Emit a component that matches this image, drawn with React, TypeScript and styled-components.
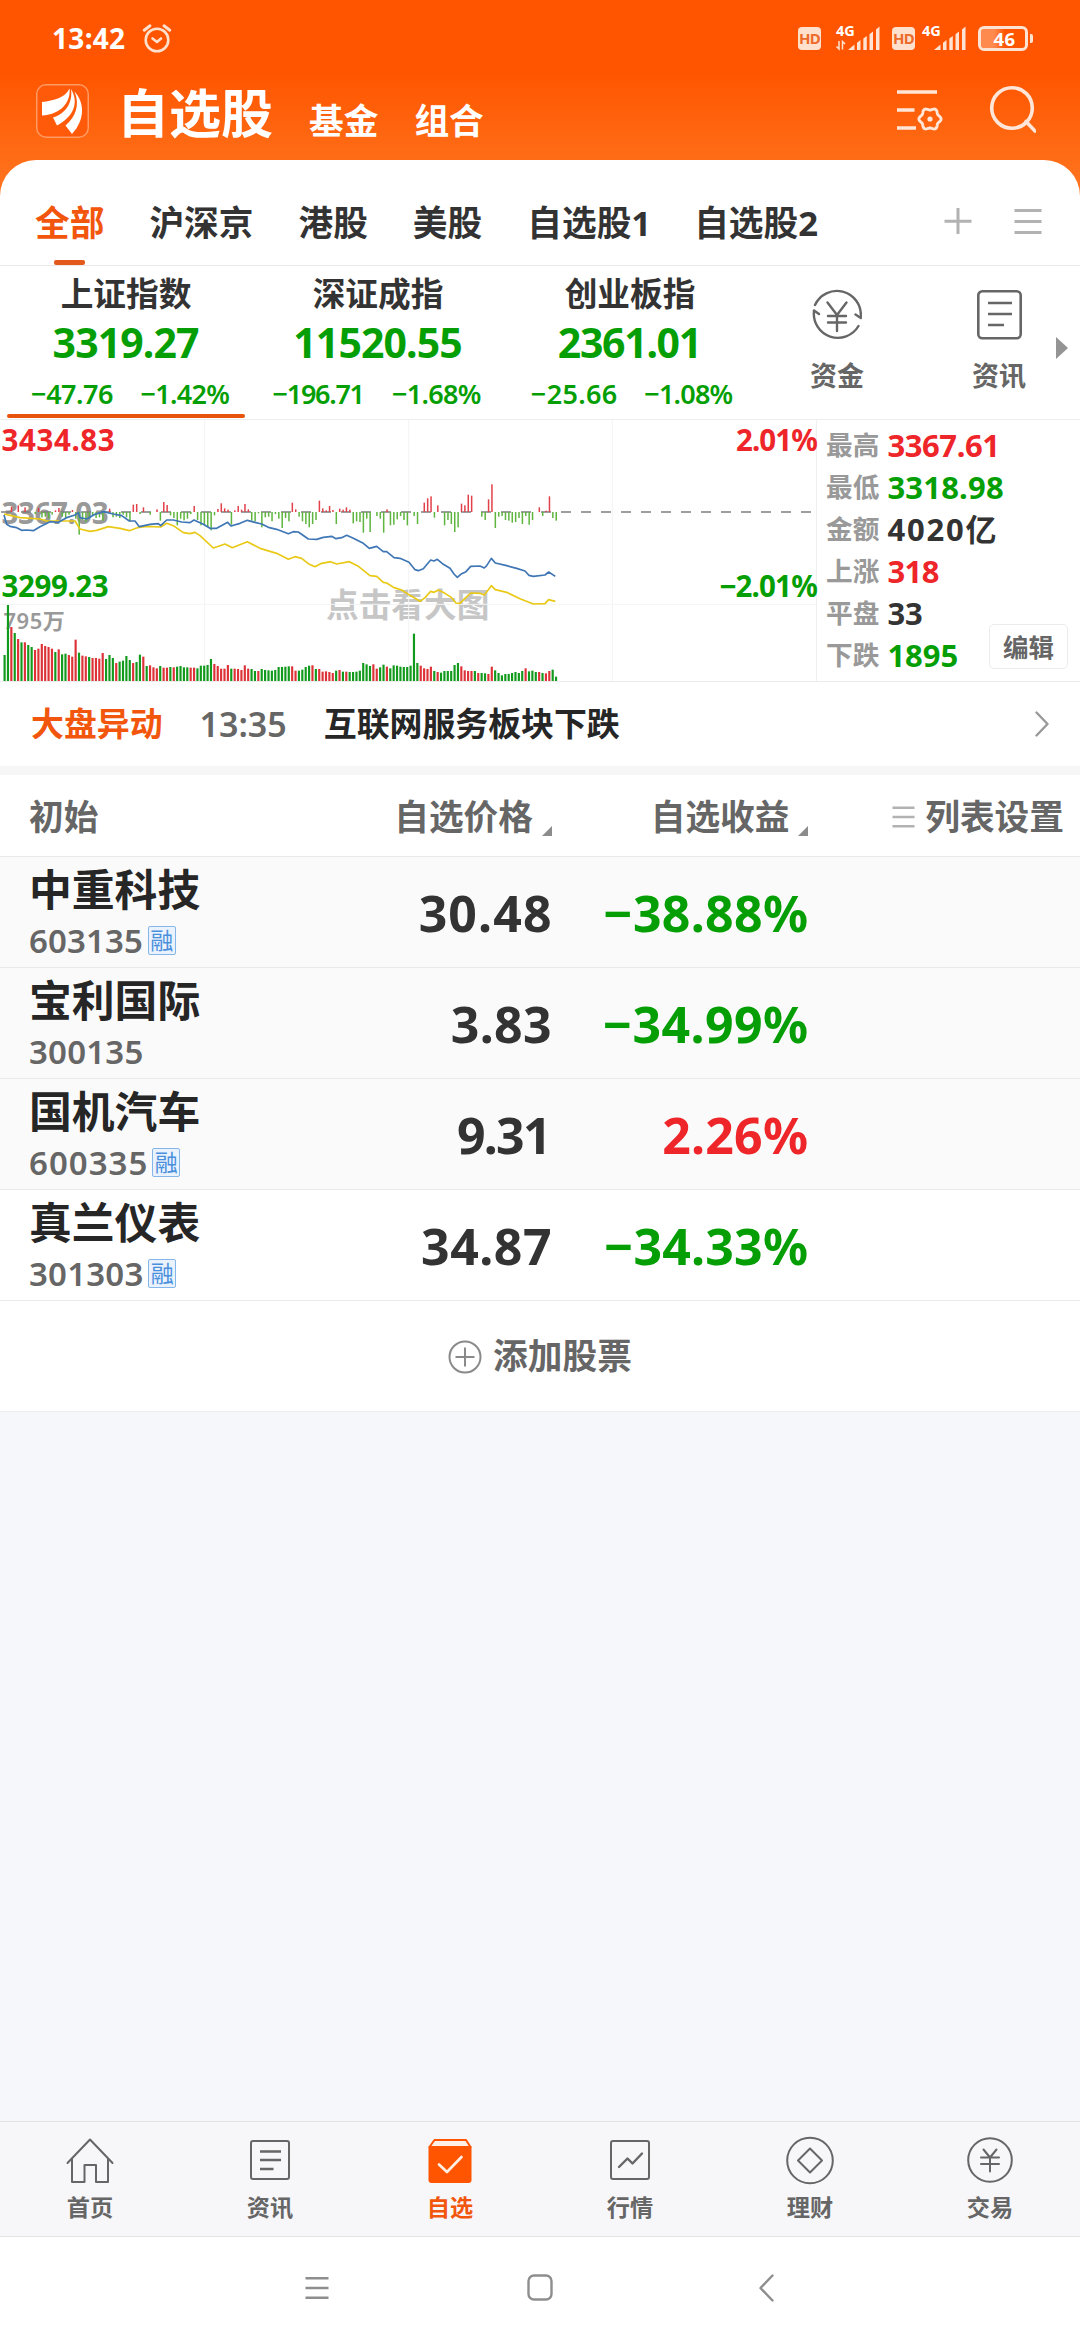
import React from "react";
import styled, { createGlobalStyle } from "styled-components";

const C = {
  orange: "#ff5500",
  accent: "#f2560d",
  green: "#059f05",
  red: "#ee2529",
  ink: "#333333",
  dark: "#262626",
  mid: "#666666",
  soft: "#999999",
  line: "#e9e9e9",
};

const Global = createGlobalStyle`
  html, body { margin: 0; padding: 0; background: #fff; }
  * { box-sizing: border-box; }
  body {
    font-family: "Noto Sans", "Noto Sans CJK SC", sans-serif;
    font-weight: 700;
    color: ${C.ink};
  }
`;

const Screen = styled.div`
  width: 1080px;
  height: 2340px;
  display: flex;
  flex-direction: column;
  overflow: hidden;
  background: #f6f7fb;
  white-space: nowrap;
`;

const Text = styled.span<{ $size: number; $color?: string; $ls?: number; $weight?: number; $lh?: number }>`
  font-size: ${(p) => p.$size}px;
  line-height: ${(p) => p.$lh ?? p.$size + 4}px;
  color: ${(p) => p.$color ?? "inherit"};
  letter-spacing: ${(p) => p.$ls ?? 0}px;
  margin-right: ${(p) => -(p.$ls ?? 0)}px;
  font-weight: ${(p) => p.$weight ?? 700};
  display: block;
`;

/* ---------- top ---------- */

const Top = styled.header`
  height: 266px;
  display: flex;
  flex-direction: column;
  background: linear-gradient(#ff5500 0, #ff5500 72px, #ff6e18 165px, #ff7420 200px);
`;

const StatusBar = styled.div`
  height: 76px;
  padding: 0 47px 0 52px;
  display: flex;
  align-items: center;
  gap: 17px;
  color: #fff;
`;

const StatusIcons = styled.div`
  margin-left: auto;
  display: flex;
  align-items: center;
`;

const HdBadge = styled.span`
  width: 23px;
  height: 23px;
  border-radius: 4px;
  background: #ffe0cc;
  color: #ec6a2a;
  font-size: 15px;
  line-height: 23px;
  display: flex;
  justify-content: center;
  letter-spacing: -0.8px;
`;

const Signal = styled.span<{ $wide?: boolean }>`
  position: relative;
  width: 46px;
  height: 25px;
  margin: ${(p) => (p.$wide ? "0 10px 0 15px" : "0 8px 0 7px")};
`;

const Net = styled.span`
  position: absolute;
  left: 0;
  top: -2px;
  font-size: 14.5px;
  line-height: 13px;
`;

const BatteryBox = styled.span`
  display: flex;
  align-items: center;
  margin-left: 2px;
  gap: 2px;
  &::after {
    content: "";
    width: 3px;
    height: 9px;
    border-radius: 0 2px 2px 0;
    background: #ffe3d2;
  }
`;

const Battery = styled.span`
  width: 50px;
  height: 25px;
  border: 3px solid #ffe3d2;
  border-radius: 6px;
  font-size: 18.5px;
  line-height: 19px;
  text-align: center;
  padding-left: 3px;
  letter-spacing: 0.3px;
  background: linear-gradient(90deg, #ff8a4d 0 13px, transparent 24px);
  background-clip: padding-box;
`;

const TitleBar = styled.div`
  height: 84px;
  padding: 0 44px 0 36px;
  display: flex;
`;

const Logo = styled.div`
  width: 53px;
  height: 54px;
  margin-top: 8px;
  border-radius: 10px;
  background: #ff5a0a;
  box-shadow: inset 0 0 0 1.5px #ff9a63;
`;

const Titles = styled.div`
  display: flex;
  align-items: flex-end;
  height: 56px;
  gap: 36px;
  margin: 9px 0 0 28px;
  color: #fff;
`;

const SubTitle = styled(Text)`
  padding-bottom: 1px;
`;

const TopIcons = styled.div`
  margin-left: auto;
  margin-top: 8px;
  display: flex;
  gap: 43px;
`;

const TabSheet = styled.div`
  height: 106px;
  background: #fff;
  border-radius: 36px 36px 0 0;
  border-bottom: 1px solid ${C.line};
  padding: 0 38px 0 35px;
  display: flex;
`;

const Tabs = styled.nav`
  display: flex;
  gap: 45px;
`;

const Tab = styled.span<{ $on?: boolean }>`
  font-size: 34.7px;
  line-height: 40px;
  padding-top: 43px;
  color: ${(p) => (p.$on ? C.accent : C.ink)};
  display: flex;
  flex-direction: column;
  &:last-child {
    margin-left: -2px;
  }
  &::after {
    content: "";
    width: 31px;
    height: 5px;
    margin: 17px auto 0;
    border-radius: 2px;
    background: ${(p) => (p.$on ? "#e35a1c" : "transparent")};
  }
`;

const TabTools = styled.div`
  margin-left: auto;
  padding-top: 46px;
  display: flex;
  gap: 42px;
`;

/* ---------- indices ---------- */

const IndexStrip = styled.section`
  height: 154px;
  background: #fff;
  display: flex;
  border-bottom: 1px solid #eeeeee;
`;

const IndexCell = styled.div<{ $on?: boolean }>`
  width: 252px;
  padding: 8px 7px 0;
  display: flex;
  flex-direction: column;
  align-items: center;
  &::after {
    content: "";
    width: 238px;
    height: 4px;
    margin-top: 7px;
    border-radius: 2px;
    background: ${(p) => (p.$on ? "#e8530c" : "transparent")};
  }
`;

const Changes = styled.div<{ $shift: number }>`
  display: flex;
  justify-content: center;
  gap: 27px;
  margin-left: ${(p) => p.$shift}px;
  margin-top: 10px;
`;

const Quick = styled.div`
  width: 162px;
  padding-top: 23px;
  display: flex;
  flex-direction: column;
  align-items: center;
  gap: 18px;
`;

const QuickWrap = styled.div`
  display: flex;
  position: relative;
`;

const NextArrow = styled.i`
  position: absolute;
  right: 12px;
  top: 71px;
  border-left: 12px solid #949494;
  border-top: 11px solid transparent;
  border-bottom: 11px solid transparent;
`;

/* ---------- chart ---------- */

const Market = styled.section`
  height: 262px;
  background: #fff;
  display: flex;
  border-bottom: 1px solid #ececec;
`;

const ChartBox = styled.div`
  position: relative;
  width: 817px;
  border-right: 1px solid #f0f0f0;
`;

const ChartLabel = styled.span<{ $y: number; $size?: number; $color: string; $right?: boolean; $ls?: number; $x?: number; $weight?: number }>`
  position: absolute;
  top: ${(p) => p.$y - 20}px;
  ${(p) => (p.$right ? "right: -1px;" : `left: ${p.$x ?? 1.5}px;`)}
  font-size: ${(p) => p.$size ?? 29.5}px;
  font-weight: ${(p) => p.$weight ?? 700};
  line-height: 40px;
  letter-spacing: ${(p) => p.$ls ?? 0}px;
  color: ${(p) => p.$color};
`;

const Layer = styled.svg`
  position: absolute;
  left: 0;
  top: 0;
`;

const Stats = styled.dl`
  margin: 0;
  padding: 4px 0 0 9px;
  width: 263px;
  position: relative;
`;

const StatRow = styled.div`
  height: 42px;
  display: flex;
  align-items: center;
  gap: 8px;
`;

const EditButton = styled.button`
  position: absolute;
  right: 12px;
  bottom: 12px;
  width: 79px;
  height: 45px;
  padding: 0;
  border: 1px solid #ececec;
  border-radius: 5px;
  background: #fff;
  color: ${C.mid};
  font: inherit;
  font-weight: 600;
  font-size: 25.5px;
  line-height: 42px;
`;

/* ---------- news ---------- */

const NewsBar = styled.section`
  height: 84px;
  background: #fff;
  display: flex;
  align-items: center;
  padding: 0 31px 0 31px;
  gap: 37px;
`;

const Push = styled.div`
  margin-left: auto;
`;

const Band = styled.div`
  height: 9px;
  background: #f6f6f6;
`;

/* ---------- table ---------- */

const Grid = styled.div<{ $h: number; $bg?: string }>`
  height: ${(p) => p.$h}px;
  background: ${(p) => p.$bg ?? "#fff"};
  border-bottom: 1px solid ${C.line};
  display: grid;
  grid-template-columns: 300px 222.5px 256.5px 1fr;
  padding: 0 16px 0 29px;
  align-items: center;
`;

const HeadCell = styled.div<{ $gap?: number }>`
  display: flex;
  justify-content: flex-end;
  align-items: center;
  gap: ${(p) => p.$gap ?? 8.5}px;
  padding-top: 3px;
`;

const Corner = styled.i`
  width: 0;
  height: 0;
  margin-top: 28px;
  border-left: 10px solid transparent;
  border-bottom: 10px solid #8c8c8c;
`;

const Right = styled.div`
  display: flex;
  justify-content: flex-end;
  padding-top: 1px;
`;

const NameCell = styled.div`
  display: flex;
  flex-direction: column;
  padding-top: 4px;
`;

const CodeLine = styled.div`
  display: flex;
  align-items: center;
  gap: 5px;
  height: 48px;
`;

const Margin = styled.span`
  width: 28px;
  height: 29px;
  border: 1.5px solid #84b6ea;
  border-radius: 2px;
  background: #e9f2fd;
  color: #4a8fdc;
  font-size: 23px;
  line-height: 26px;
  font-weight: 400;
  display: flex;
  justify-content: center;
`;

const AddRow = styled.button`
  height: 111px;
  width: 100%;
  border: 0;
  border-bottom: 1px solid #eeeeee;
  background: #fff;
  display: flex;
  align-items: center;
  justify-content: center;
  gap: 11px;
  padding: 1px 0 0 0;
  font: inherit;
`;

/* ---------- bottom ---------- */

const Empty = styled.div`
  flex: 1;
  background: #f5f7fb;
`;

const BottomNav = styled.nav`
  height: 116px;
  background: #f7f7fa;
  border-top: 1px solid #e2e2e4;
  border-bottom: 1px solid #e4e4e4;
  display: flex;
`;

const NavItem = styled.div`
  flex: 1;
  display: flex;
  flex-direction: column;
  align-items: center;
  padding-top: 13px;
  gap: 8px;
`;

const SystemNav = styled.footer`
  height: 103px;
  background: #fff;
  display: flex;
  justify-content: center;
  align-items: center;
  gap: 198px;
  padding: 0 0 1px 2px;
`;

/* ---------- icons ---------- */

const Svg = styled.svg`
  display: block;
  flex: none;
`;

type IconProps = { w: number; h: number; color?: string; sw?: number; children: React.ReactNode };
const Ico = ({ w, h, color = "#666", sw = 2, children }: IconProps) => (
  <Svg width={w} height={h} viewBox={`0 0 ${w} ${h}`} fill="none" stroke={color} strokeWidth={sw} strokeLinecap="round" strokeLinejoin="round">
    {children}
  </Svg>
);

const AlarmIcon = () => (
  <Ico w={30} h={30} color="#ffe0cc" sw={2.6}>
    <circle cx="15" cy="17" r="11.3" />
    <path d="M10.5 15.5 L15 19 L19 15.5" />
    <path d="M2.2 7.2 L8 2.8 M27.8 7.2 L22 2.8" strokeWidth="3" />
  </Ico>
);

const Bars = ({ arrows }: { arrows?: boolean }) => (
  <Svg width="46" height="25" viewBox="0 0 46 25">
    <g fill="#ffe3d2">
      <path d="M12 24 L18.500 18.500 V24 Z" />
      <path d="M21 24 V16.800 L24.500 14 V24 Z" />
      <path d="M27.300 24 V12.500 L30.800 10 V24 Z" />
      <path d="M33.500 24 V8.200 L37 5.500 V24 Z" />
      <path d="M40 24 V3.500 L43.500 0.500 V24 Z" />
    </g>
    {arrows && <path d="M3 15 V23 L0.500 20.500 M6.500 23.500 V15.500 L9 18" fill="none" stroke="#ffe3d2" strokeWidth="1.500" />}
  </Svg>
);

const LogoMark = () => (
  <Svg width="53" height="54" viewBox="36 84 53 54">
    <g fill="#fff">
      <path d="M42 102 C54 100.500 65 98 69.500 88.500 C71 101 62 114.500 42 115.500 Z" />
      <path d="M71 89 C73 102 66 113.500 53 117.500 L57 125.500 C72 117.500 80 104 71 89 Z" />
      <path d="M74.500 91.500 C80 104 76 117 65.500 125.500 L72 134 C85 120 85 103 74.500 91.500 Z" />
    </g>
  </Svg>
);

/* six-lobed gear outline around (34, 35) */
const GEAR =
  Array.from({ length: 72 }, (_, i) => {
    const a = (i / 72) * Math.PI * 2;
    const r = 10 + 1.1 * Math.cos(6 * a);
    return `${i ? "L" : "M"}${(34 + r * Math.cos(a)).toFixed(2)} ${(35 + r * Math.sin(a)).toFixed(2)}`;
  }).join(" ") + " Z";

const FilterGear = () => (
  <Ico w={48} h={48} color="#ffe6d8" sw={3.6}>
    <path strokeLinecap="butt" d="M1 8 H41 M1 26 H18.500 M1 44 H20" />
    <path strokeWidth="2.900" d={GEAR} />
    <circle cx="34" cy="35" r="2.600" fill="#ffe6d8" stroke="none" />
  </Ico>
);

const SearchIcon = () => (
  <Ico w={49} h={50} color="#ffe6d8" sw={3.6}>
    <circle cx="25" cy="24" r="20.300" />
    <path d="M39 37.500 L48 47" />
  </Ico>
);

const PlusIcon = () => (
  <Ico w={28} h={28} color="#b2b2b2" sw={3}>
    <path d="M14 2 V28 M0.500 15.300 H27.500" strokeLinecap="butt" />
  </Ico>
);

const MenuIcon = ({ w = 26, h = 28, d = 11, color = "#b2b2b2", sw = 3 }) => (
  <Ico w={w} h={h} color={color} sw={sw}>
    <path strokeLinecap="butt" d={`M0.500 ${h / 2 - d} H${w - 0.5} M0.500 ${h / 2} H${w - 0.5} M0.500 ${h / 2 + d} H${w - 0.5}`} />
  </Ico>
);

const FundIcon = () => (
  <Ico w={50} h={52} sw={2.4}>
    <path d="M3 16 A24 24 0 0 1 48.800 27.500 M2 22 A24 24 0 0 0 46.500 37" />
    <path d="M43.500 25.500 L48.800 29 M2 21.500 L7 25" />
    <path d="M15.500 13.500 L25 26 L34.500 13.500 M25 26 V42 M16 27 H34 M16 33.500 H34" />
  </Ico>
);

const InfoIcon = () => (
  <Ico w={45} h={52} sw={2.6}>
    <rect x="1.300" y="2.300" width="42.400" height="47" rx="4" />
    <path strokeLinecap="butt" d="M11 14 H35 M11 25 H35 M11 36 H27" />
  </Ico>
);

const HomeIcon = () => (
  <Ico w={50} h={50}>
    <path d="M2.500 28 L25 4.500 L47.500 28 M7 24 V47 H19.500 V30 H31 V47 H43 V24" />
  </Ico>
);

const DocIcon = () => (
  <Ico w={50} h={50}>
    <rect x="6" y="6" width="38" height="38" rx="2" />
    <path d="M15 16.500 H36 M15 25 H36 M15 34 H28.500" strokeLinecap="butt" strokeWidth="2.400" />
  </Ico>
);

const BoxIcon = () => (
  <Ico w={50} h={50} color={C.orange}>
    <path d="M9.500 5 H41 L45.500 12 H4.500 Z" fill="#fff0e6" />
    <path d="M4.500 12 H45.500 V45 Q45.500 47 43.500 47 H6.500 Q4.500 47 4.500 45 Z" fill={C.orange} />
    <path d="M14 29.500 L22 37 L36.500 22" stroke="#fff0e6" strokeWidth="2.600" />
  </Ico>
);

const TrendIcon = () => (
  <Ico w={50} h={50}>
    <rect x="6" y="6" width="38" height="38" rx="2" />
    <path d="M14 32 L22.500 23.500 L27.500 28.500 L37 18.500" strokeWidth="2.400" />
  </Ico>
);

const WealthIcon = () => (
  <Ico w={50} h={50}>
    <circle cx="25" cy="25.500" r="22.800" />
    <path d="M25 13.500 L37 25.500 L25 37.500 L13 25.500 Z" />
  </Ico>
);

const TradeIcon = () => (
  <Ico w={50} h={50}>
    <circle cx="25" cy="25" r="21.800" />
    <path d="M18.500 14.500 L25 22.500 L31.500 14.500 M25 22.500 V36.500 M16 22.500 H34 M16 29 H34" />
  </Ico>
);

/* ---------- data ---------- */

const VOLUME =
  "78g 228g 162r 144g 126r 116g 116r 108g 102g 93r 97r 111r 105r 102r 97r 87g 95r 80g 82g 78r 73r 124r 85g 76r 74r 72g 69r 69r 67r 84r 66g 78g 69g 54r 58g 61g 75g 63g 54r 57g 79g 73r 45g 47r 41r 38r 45g 40r 40r 42g 41r 43g 45g 41g 41g 40r 40r 38g 46g 46g 48g 66g 51r 45r 37r 37r 48r 37g 37r 36r 33r 47r 37r 36g 30g 30r 36g 33g 32g 31g 33g 42g 42g 43g 44g 44r 31r 31g 34g 42g 46g 47r 36g 36r 28r 29r 27r 24r 31g 33r 28g 28r 27g 27g 28g 31g 54g 50g 45g 50r 37r 41g 49g 43r 38g 47g 46g 43g 42g 42g 46g 142g 54g 46r 38r 36r 43r 30g 27r 25g 30g 30g 30g 48g 54g 44r 32r 30r 30r 30g 24r 24g 23g 21r 43r 32g 24g 17g 21g 21g 24g 27g 24g 30g 38r 29g 31g 27g 27r 24g 23r 30r 34g 13g"
    .split(" ")
    .map((t) => ({ v: parseInt(t, 10), up: t.endsWith("r") }));

const FORCE: number[] = [
  0, 0, 16, 0, 20, 0, 14, 0, 0, -6, 12, -16, -14, -20, -8, 5, 12, -14, -18, -8, 6, -20, -68, -24, -30, -20, -10, -18, -16, -26, 0,
  10, -16, -14, -18, -8, -16, -28, 22, 24, -6, 14, 0, -8, 0, 8, -26, 30, 21, -10, -18, -40, -20, -25, -20, -6, 18, -24, -40,
  -38, -45, -55, -10, 9, 26, 11, 7, -38, 5, 18, 7, 24, 8, -26, -28, -4, -46, -16, -14, -28, -6, -20, -48, -18, -28, 28, 8,
  -14, -28, -36, -46, -36, -24, 34, 11, 5, 18, 6, -36, 10, 7, 14, 7, -34, -28, -30, -62, -20, -60, 0, -12, -20, -62, 8, -40,
  -38, -22, -12, -24, -40, 0, -12, -36, 0, 28, 41, 47, -17, 20, 0, -40, -24, -36, -60, -46, 25, 20, 52, 49, 0, 0, -14, -24,
  38, 83, -48, -14, -12, -24, -26, -32, -30, -18, -36, -12, -38, -24, 0, 14, -12, 4, 47, -18, -26,
];

const PRICE =
  "12,300 20,328 30,334 50,338 65,346 80,345 100,347 120,335 150,320 175,322 200,308 225,300 235,293 240,308 260,312 285,298 310,290 340,297 365,302 388,318 405,318 418,335 450,328 475,326 482,332 500,315 520,315 545,321 570,323 582,315 610,328 630,340 650,340 683,322 693,333 720,325 742,316 765,322 785,327 805,337 830,343 865,356 880,350 895,351 925,372 950,373 970,367 995,364 1008,371 1025,368 1040,361 1060,370 1090,385 1108,400 1130,394 1150,410 1160,410 1182,428 1200,430 1227,442 1245,464 1255,467 1270,461 1292,435 1302,438 1312,433 1330,448 1350,460 1362,477 1372,487 1385,476 1398,470 1412,454 1440,453 1453,459 1460,452 1474,430 1486,444 1520,452 1550,460 1575,468 1587,481 1600,484 1635,480 1646,471 1666,484";
const AVERAGE =
  "12,297 60,308 120,312 140,318 200,318 225,318 240,342 270,349 290,346 325,335 360,340 388,347 412,338 440,334 482,336 500,325 520,332 550,353 570,356 585,352 600,362 640,399 675,387 697,398 742,380 780,400 830,415 865,433 885,425 905,430 925,446 945,455 965,445 992,440 1010,447 1048,440 1075,454 1110,482 1130,484 1150,502 1160,504 1182,518 1205,525 1230,541 1260,559 1275,548 1292,529 1302,532 1315,525 1335,535 1355,548 1368,564 1380,565 1395,550 1412,534 1440,535 1453,540 1474,512 1486,524 1520,532 1560,551 1600,567 1635,566 1646,554 1666,559";

/* horizontal distance between two minutes, in chart units */
const STEP = 10.15;

const indices = [
  { name: "上证指数", value: "3319.27", ls: -0.9, a: "−47.76", als: -0.5, b: "−1.42%", bls: -0.7, shift: 9, on: true },
  { name: "深证成指", value: "11520.55", ls: -0.9, a: "−196.71", als: -1.3, b: "−1.68%", bls: -0.7, shift: -2 },
  { name: "创业板指", value: "2361.01", ls: -1.3, a: "−25.66", als: 0.3, b: "−1.08%", bls: -0.8, shift: 4 },
];

const stats = [
  { k: "最高", v: "3367.61", c: C.red, ls: -0.4 },
  { k: "最低", v: "3318.98", c: C.green, ls: 0.2 },
  { k: "金额", v: "4020亿", c: C.ink, ls: 1.8 },
  { k: "上涨", v: "318", c: C.red, ls: -0.5 },
  { k: "平盘", v: "33", c: C.ink, ls: 0 },
  { k: "下跌", v: "1895", c: C.green, ls: 0 },
];

const stocks = [
  { name: "中重科技", code: "603135", m: true, price: "30.48", pls: 1.1, gain: "−38.88%", gls: 0.3, c: C.green, bg: "#fafafa", cls: 0.1 },
  { name: "宝利国际", code: "300135", m: false, price: "3.83", pls: 0.3, gain: "−34.99%", gls: 0.4, c: C.green, bg: "#fafafa", cls: 0.2 },
  { name: "国机汽车", code: "600335", m: true, price: "9.31", pls: -1.8, gain: "2.26%", gls: 0.2, c: C.red, bg: "#fafafa", cls: 1 },
  { name: "真兰仪表", code: "301303", m: true, price: "34.87", pls: 0.5, gain: "−34.33%", gls: 0.2, c: C.green, bg: "#fff", cls: 0.2 },
];

const navs = [
  { t: "首页", i: <HomeIcon /> },
  { t: "资讯", i: <DocIcon /> },
  { t: "自选", i: <BoxIcon />, on: true },
  { t: "行情", i: <TrendIcon /> },
  { t: "理财", i: <WealthIcon /> },
  { t: "交易", i: <TradeIcon /> },
];

const Chart = () => (
  <Layer width="816" height="261" viewBox="0 15 2448 783">
    <path d="M614 15 V798 M1226 15 V798 M1837 15 V798 M0 568 H2448" stroke="#f3f3f3" strokeWidth="3" />
    <path d="M3 291 H2448" stroke="#7d7d7d" strokeWidth="5" strokeDasharray="30 30" />
    {FORCE.map((v, i) =>
      v === 0 ? null : (
        <rect key={i} x={12 + i * STEP} width="4.500" y={v > 0 ? 291 - v : 291} height={Math.abs(v)} fill={v > 0 ? "#e2414b" : "#5fb53f"} />
      ),
    )}
    {VOLUME.map((b, i) => (
      <rect key={i} x={10.5 + i * STEP} width="6.500" y={798 - b.v} height={b.v} fill={b.up ? "#dd3338" : "#129a1c"} />
    ))}
    <g fill="none" strokeWidth="5" strokeLinejoin="round">
      <polyline points={AVERAGE} stroke="#e9c915" />
      <polyline points={PRICE} stroke="#3f76b5" />
    </g>
  </Layer>
);

export default function App() {
  return (
    <Screen lang="zh-CN">
      <Global />
      <Top>
        <StatusBar>
          <Text $size={28} $ls={0.3}>13:42</Text>
          <AlarmIcon />
          <StatusIcons>
            <HdBadge>HD</HdBadge>
            <Signal $wide><Bars arrows /><Net>4G</Net></Signal>
            <HdBadge>HD</HdBadge>
            <Signal><Bars /><Net>4G</Net></Signal>
            <BatteryBox><Battery>46</Battery></BatteryBox>
          </StatusIcons>
        </StatusBar>
        <TitleBar>
          <Logo><LogoMark /></Logo>
          <Titles>
            <Text $size={52} $lh={56}>自选股</Text>
            <SubTitle $size={34.7} $lh={38}>基金</SubTitle>
            <SubTitle $size={34.7} $lh={38}>组合</SubTitle>
          </Titles>
          <TopIcons><FilterGear /><SearchIcon /></TopIcons>
        </TitleBar>
        <TabSheet>
          <Tabs>
            <Tab $on>全部</Tab>
            <Tab>沪深京</Tab>
            <Tab>港股</Tab>
            <Tab>美股</Tab>
            <Tab>自选股1</Tab>
            <Tab>自选股2</Tab>
          </Tabs>
          <TabTools><PlusIcon /><MenuIcon w={28} h={31} /></TabTools>
        </TabSheet>
      </Top>

      <IndexStrip>
        {indices.map((x) => (
          <IndexCell key={x.name} $on={x.on}>
            <Text $size={32.7} $lh={40}>{x.name}</Text>
            <Text $size={41} $lh={57} $ls={x.ls} $color={C.green}>{x.value}</Text>
            <Changes $shift={x.shift}>
              <Text $size={27} $lh={26} $ls={x.als} $weight={600} $color={C.green}>{x.a}</Text>
              <Text $size={27} $lh={26} $ls={x.bls} $weight={600} $color={C.green}>{x.b}</Text>
            </Changes>
          </IndexCell>
        ))}
        <QuickWrap>
          <Quick><FundIcon /><Text $size={27} $lh={34} $weight={600} $color={C.mid}>资金</Text></Quick>
          <Quick><InfoIcon /><Text $size={27} $lh={34} $weight={600} $color={C.mid}>资讯</Text></Quick>
          <NextArrow />
        </QuickWrap>
      </IndexStrip>

      <Market>
        <ChartBox>
          <ChartLabel $y={20} $color={C.red} $ls={0.6}>3434.83</ChartLabel>
          <ChartLabel $y={93} $color={C.soft} $ls={-0.4}>3367.03</ChartLabel>
          <ChartLabel $y={166} $color={C.green} $ls={-0.4}>3299.23</ChartLabel>
          <ChartLabel $y={200} $color={C.soft} $size={22} $ls={0.5} $x={3.5} $weight={600}>795万</ChartLabel>
          <ChartLabel $y={185} $color="#c6c6c6" $size={32.7} $x={326}>点击看大图</ChartLabel>
          <ChartLabel $y={20} $color={C.red} $right $ls={-0.9}>2.01%</ChartLabel>
          <ChartLabel $y={166} $color={C.green} $right $ls={-0.8}>−2.01%</ChartLabel>
          <Chart />
        </ChartBox>
        <Stats>
          {stats.map((s) => (
            <StatRow key={s.k}>
              <Text $size={26.7} $weight={600} $color={C.soft}>{s.k}</Text>
              <Text $size={31} $lh={40} $color={s.c} $ls={s.ls}>{s.v}</Text>
            </StatRow>
          ))}
          <EditButton>编辑</EditButton>
        </Stats>
      </Market>

      <NewsBar>
        <Text $size={32.9} $color={C.accent}>大盘异动</Text>
        <Text $size={34} $weight={600} $color={C.mid} $ls={0}>13:35</Text>
        <Text $size={32.9} $color={C.dark}>互联网服务板块下跌</Text>
        <Push>
          <Ico w={14} h={26} color="#999" sw={2.4}><path d="M1.500 1.500 L12.500 13 L1.500 24.500" /></Ico>
        </Push>
      </NewsBar>
      <Band />

      <Grid $h={82}>
        <HeadCell><Text $size={34.7} $color={C.mid}>初始</Text><Push /></HeadCell>
        <HeadCell><Text $size={34.7} $color={C.mid}>自选价格</Text><Corner /></HeadCell>
        <HeadCell><Text $size={34.7} $color={C.mid}>自选收益</Text><Corner /></HeadCell>
        <HeadCell $gap={10}><MenuIcon w={23} h={24} d={9.3} sw={2.6} /><Text $size={34.7} $color={C.mid}>列表设置</Text></HeadCell>
      </Grid>

      {stocks.map((s) => (
        <Grid key={s.code} $h={111} $bg={s.bg}>
          <NameCell>
            <Text $size={42.8} $lh={52} $color={C.dark}>{s.name}</Text>
            <CodeLine>
              <Text $size={33} $weight={600} $color={C.mid} $ls={s.cls}>{s.code}</Text>
              {s.m && <Margin>融</Margin>}
            </CodeLine>
          </NameCell>
          <Right><Text $size={50} $lh={56} $ls={s.pls}>{s.price}</Text></Right>
          <Right><Text $size={50} $lh={56} $color={s.c} $ls={s.gls}>{s.gain}</Text></Right>
        </Grid>
      ))}

      <AddRow>
        <Ico w={34} h={34} color="#8a8a8a"><circle cx="17" cy="17" r="15.500" /><path d="M17 7.500 V26.500 M7.500 17 H26.500" strokeLinecap="butt" /></Ico>
        <Text $size={34.7} $color={C.mid}>添加股票</Text>
      </AddRow>

      <Empty />

      <BottomNav>
        {navs.map((n) => (
          <NavItem key={n.t}>
            {n.i}
            <Text $size={23.2} $lh={28} $color={n.on ? C.accent : C.mid}>{n.t}</Text>
          </NavItem>
        ))}
      </BottomNav>
      <SystemNav>
        <MenuIcon w={24} h={28} d={9.700} color="#8e8e8e" sw={2.4} />
        <Ico w={26} h={28} color="#8e8e8e" sw={2.4}><rect x="1.500" y="1.500" width="23" height="24" rx="5.500" /></Ico>
        <Ico w={26} h={28} color="#8e8e8e" sw={2.4}><path d="M21.500 1.500 L9.500 14 L21.500 26.500" /></Ico>
      </SystemNav>
    </Screen>
  );
}
